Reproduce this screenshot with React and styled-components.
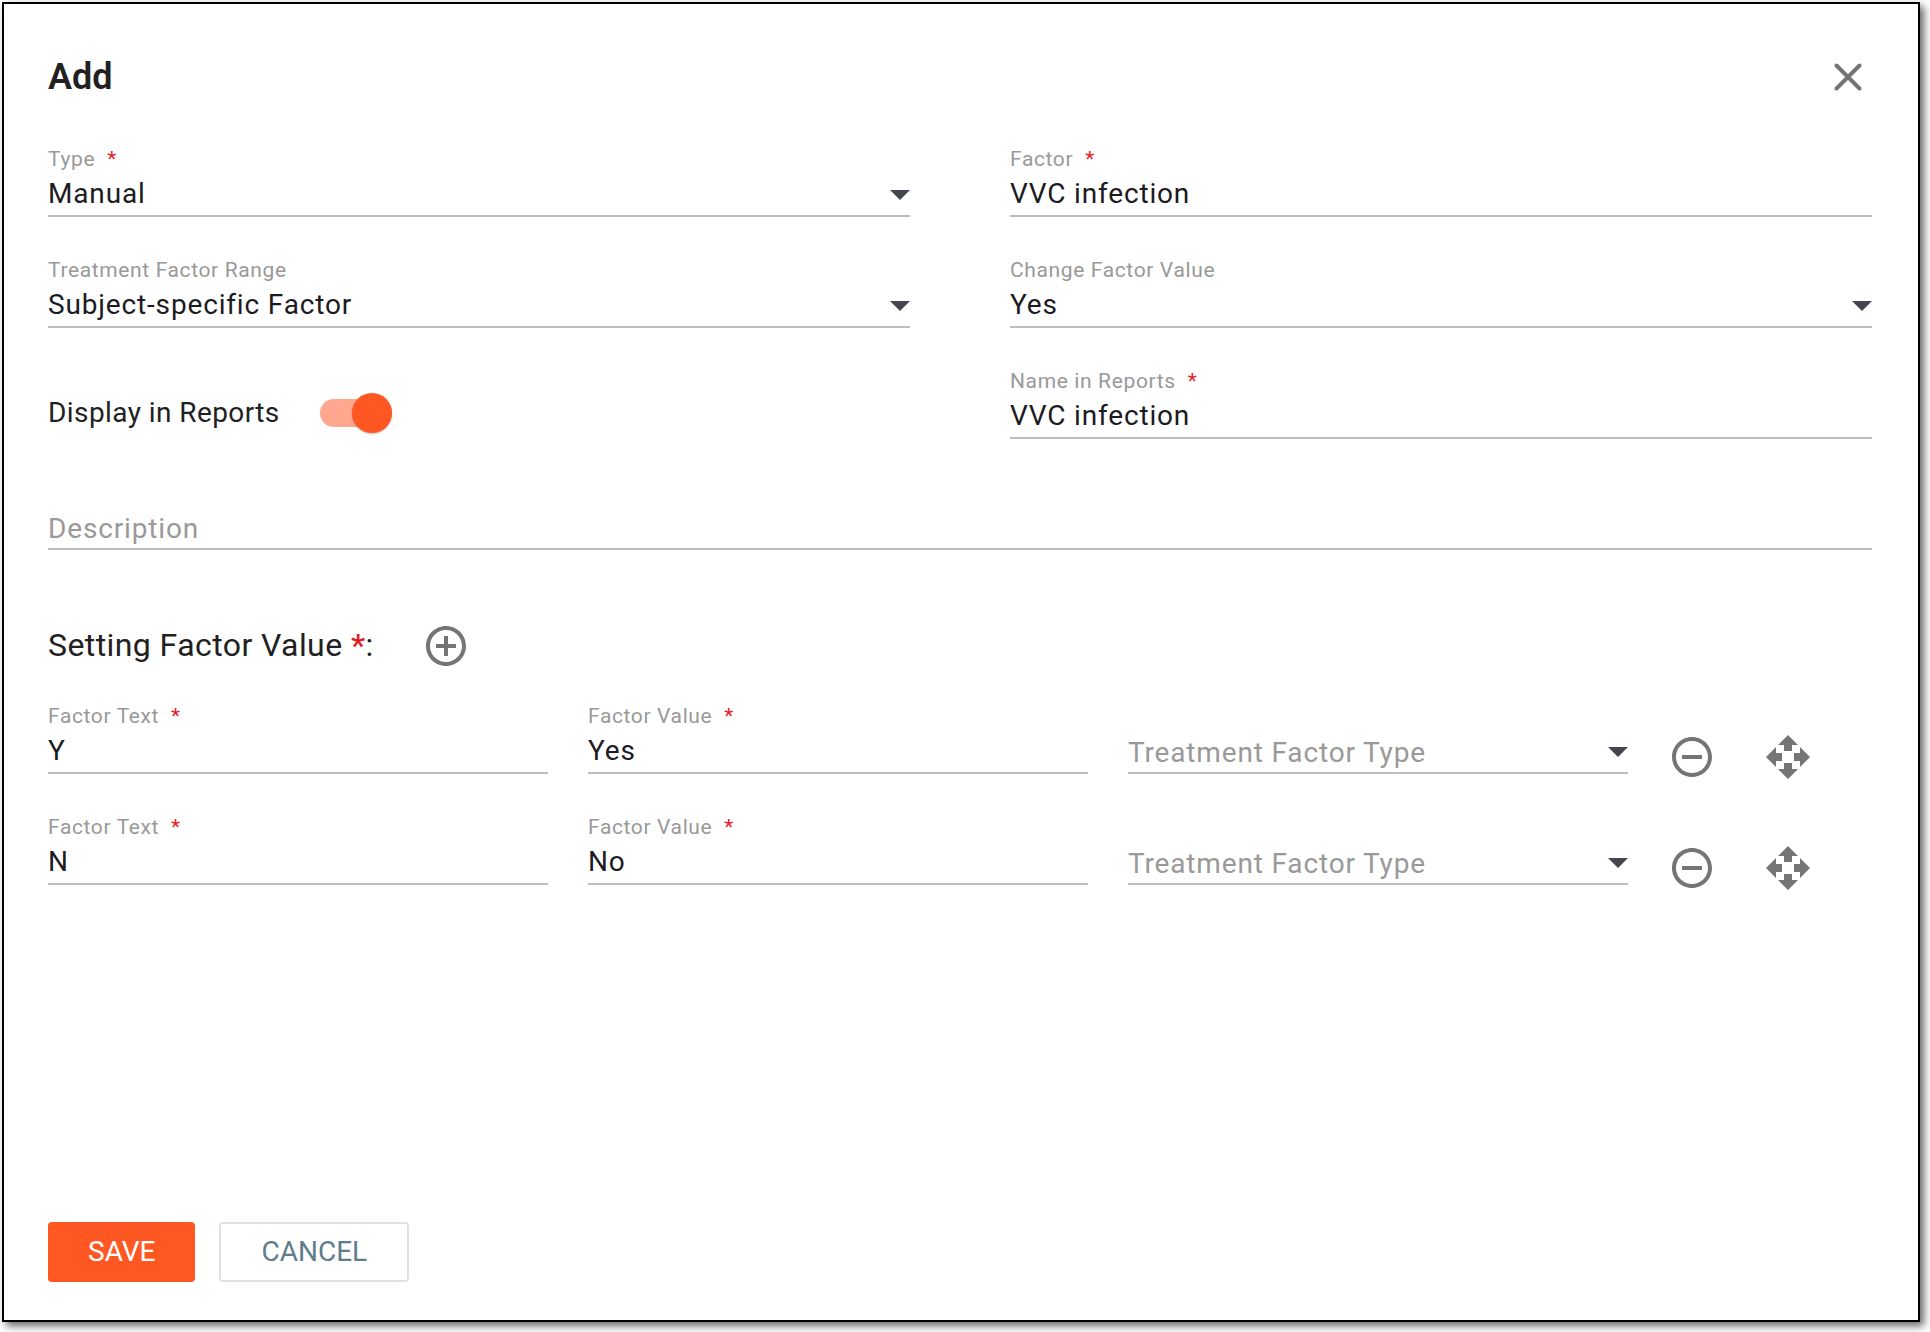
import React, { useId, useState } from "react";
import styled, { createGlobalStyle } from "styled-components";
import { MdAddCircleOutline, MdOpenWith, MdRemoveCircleOutline } from "react-icons/md";

const GlobalStyle = createGlobalStyle`
  *, *::before, *::after { box-sizing: border-box; }
  body {
    margin: 0;
    background: #fff;
    color: #212121;
    font-family: Roboto, "Liberation Sans", sans-serif;
    font-size: 28px;
  }
  button, input, select { font: inherit; }
`;

const Page = styled.div`
  display: flex;
  min-height: 100vh;
  padding: 2px 10px 10px 2px;
`;

const Dialog = styled.form`
  display: flex;
  flex-direction: column;
  flex: 1;
  min-width: 0;
  padding: 48px 46px 38px 44px;
  border: 2px solid #000;
  background: #fff;
  box-shadow: 4px 4px 8px rgba(0, 0, 0, 0.6);
`;

const Header = styled.header`
  display: flex;
  align-items: center;
  justify-content: space-between;
  height: 50px;
  margin-bottom: 43px;
`;

const Title = styled.h1`
  margin: 0;
  font-size: 36px;
  font-weight: 600;
`;

const IconButton = styled.button`
  display: flex;
  align-items: center;
  justify-content: center;
  width: 48px;
  height: 48px;
  padding: 0;
  border: 0;
  background: none;
  color: #757575;
  cursor: pointer;
`;

const FieldGrid = styled.div`
  display: grid;
  grid-template-columns: repeat(2, minmax(0, 1fr));
  gap: 39px 100px;
`;

const FullRow = styled.div`
  grid-column: 1 / -1;
`;

const FieldBox = styled.div`
  display: flex;
  flex-direction: column;
  height: 72px;
  justify-content: flex-end;
`;

const FieldLabel = styled.label`
  color: #999;
  font-size: 21px;
  line-height: 28px;
  letter-spacing: 0.03em;
`;

const ControlArea = styled.div`
  display: grid;
  height: 44px;
  border-bottom: 2px solid #bdbdbd;
  align-items: center;
  letter-spacing: 0.03em;

  > * { grid-area: 1 / 1; }
`;

const InnerLabel = styled.label`
  padding-top: 4px;
  color: #999;
  line-height: 38px;
  pointer-events: none;
`;

const TextInput = styled.input`
  width: 100%;
  height: 42px;
  padding: 0 0 2px;
  border: 0;
  outline: 0;
  background: none;
  color: #1c1b1f;
  letter-spacing: inherit;
`;

const SelectInput = styled.select`
  width: 100%;
  height: 42px;
  padding: 0 32px 2px 0;
  border: 0;
  outline: 0;
  appearance: none;
  background: none;
  color: #1c1b1f;
  letter-spacing: inherit;
`;

const Arrow = styled.span`
  justify-self: end;
  margin-top: 2px;
  border: 10px solid transparent;
  border-top-color: #44464f;
  border-bottom-width: 0;
  pointer-events: none;
`;

const Required = styled.span`
  margin-left: ${(p) => p.$gap || 0}px;
  color: #e51c23;
`;

const ToggleRow = styled.div`
  display: flex;
  align-items: center;
  align-self: end;
  gap: 40px;
  height: 52px;
`;

const ToggleLabel = styled.label`
  padding-bottom: 2px;
  letter-spacing: 0.015em;
`;

const Switch = styled.input`
  position: relative;
  width: 72px;
  height: 28px;
  margin: 0;
  border-radius: 14px;
  appearance: none;
  background: #bdbdbd;
  cursor: pointer;

  &::before {
    content: "";
    position: absolute;
    top: -6px;
    left: 0;
    width: 40px;
    height: 40px;
    border-radius: 50%;
    background: #fafafa;
    box-shadow: 0 1px 2px rgba(0, 0, 0, 0.25);
  }

  &:checked { background: #ffa78f; }
  &:checked::before { left: 32px; background: #ff5722; }
`;

const SectionHeader = styled.div`
  display: flex;
  align-items: center;
  gap: 48px;
  margin: 72px 0 32px;
`;

const SectionTitle = styled.h2`
  margin: 0;
  padding-bottom: 2px;
  font-size: 32px;
  font-weight: 400;
  letter-spacing: 0.013em;

  ${Required} { font-weight: 500; }
`;

const ValueList = styled.div`
  display: grid;
  gap: 32px;
`;

const ValueRow = styled.div`
  display: grid;
  grid-template-columns: repeat(3, minmax(0, 1fr)) 204px;
  column-gap: 40px;
  height: 79px;
`;

const RowActions = styled.div`
  display: flex;
  align-items: flex-end;
  gap: 48px;
`;

const Footer = styled.footer`
  display: flex;
  gap: 24px;
  margin-top: auto;
`;

const Button = styled.button`
  height: 60px;
  padding: 0 40px 2px;
  border: ${(p) => (p.$primary ? "0" : "2px solid #e0e0e0")};
  border-radius: 4px;
  background: ${(p) => (p.$primary ? "#ff5722" : "#fff")};
  color: ${(p) => (p.$primary ? "#fff" : "#607d8b")};
  cursor: pointer;
`;

function Field({ label, required, value = "", options }) {
  const id = useId();
  const [current, setCurrent] = useState(value);
  const onChange = (e) => setCurrent(e.target.value);

  return (
    <FieldBox>
      {current && (
        <FieldLabel htmlFor={id}>
          {label}
          {required && <Required $gap={12}>*</Required>}
        </FieldLabel>
      )}
      <ControlArea>
        {options ? (
          <SelectInput id={id} value={current} onChange={onChange}>
            {!value && <option value="" />}
            {options.map((o) => (
              <option key={o}>{o}</option>
            ))}
          </SelectInput>
        ) : (
          <TextInput id={id} type="text" value={current} onChange={onChange} />
        )}
        {!current && <InnerLabel htmlFor={id}>{label}</InnerLabel>}
        {options && <Arrow />}
      </ControlArea>
    </FieldBox>
  );
}

function CloseIcon() {
  return (
    <svg width="30" height="30" viewBox="0 0 30 30" fill="none" stroke="currentColor" strokeWidth="4" strokeLinecap="round" aria-hidden="true">
      <path d="M3.5 3.5l23 23M26.5 3.5l-23 23" />
    </svg>
  );
}

const factorValues = [
  { text: "Y", value: "Yes" },
  { text: "N", value: "No" },
];

export default function App() {
  const [display, setDisplay] = useState(true);

  return (
    <>
      <GlobalStyle />
      <Page>
        <Dialog onSubmit={(e) => e.preventDefault()}>
          <Header>
            <Title>Add</Title>
            <IconButton type="button" aria-label="Close">
              <CloseIcon />
            </IconButton>
          </Header>

          <FieldGrid>
            <Field label="Type" required value="Manual" options={["Manual"]} />
            <Field label="Factor" required value="VVC infection" />
            <Field label="Treatment Factor Range" value="Subject-specific Factor" options={["Subject-specific Factor"]} />
            <Field label="Change Factor Value" value="Yes" options={["Yes", "No"]} />
            <ToggleRow>
              <ToggleLabel htmlFor="display-in-reports">Display in Reports</ToggleLabel>
              <Switch
                id="display-in-reports"
                type="checkbox"
                role="switch"
                checked={display}
                onChange={(e) => setDisplay(e.target.checked)}
              />
            </ToggleRow>
            <Field label="Name in Reports" required value="VVC infection" />
            <FullRow>
              <Field label="Description" />
            </FullRow>
          </FieldGrid>

          <SectionHeader>
            <SectionTitle>
              Setting Factor Value <Required>*</Required>:
            </SectionTitle>
            <IconButton type="button" aria-label="Add factor value">
              <MdAddCircleOutline size={48} />
            </IconButton>
          </SectionHeader>

          <ValueList>
            {factorValues.map((f) => (
              <ValueRow key={f.text}>
                <Field label="Factor Text" required value={f.text} />
                <Field label="Factor Value" required value={f.value} />
                <Field label="Treatment Factor Type" options={["Treatment", "Control"]} />
                <RowActions>
                  <IconButton type="button" aria-label="Remove factor value">
                    <MdRemoveCircleOutline size={48} />
                  </IconButton>
                  <IconButton type="button" aria-label="Move factor value">
                    <MdOpenWith size={48} />
                  </IconButton>
                </RowActions>
              </ValueRow>
            ))}
          </ValueList>

          <Footer>
            <Button type="submit" $primary>SAVE</Button>
            <Button type="button">CANCEL</Button>
          </Footer>
        </Dialog>
      </Page>
    </>
  );
}
